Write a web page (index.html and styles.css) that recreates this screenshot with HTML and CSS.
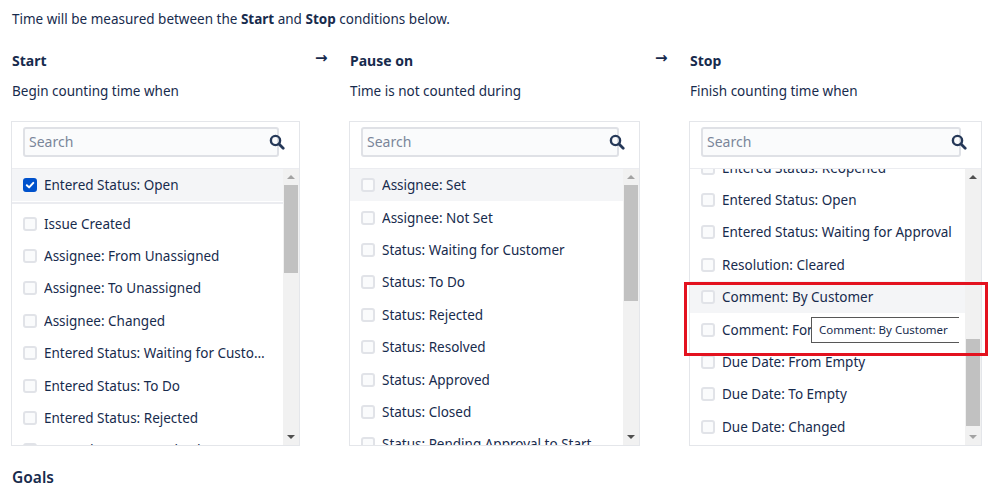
FILE: index.html
```html
<!DOCTYPE html>
<html>
<head>
<meta charset="utf-8">
<link rel="stylesheet" href="styles.css">
</head>
<body>
<p class="intro">Time will be measured between the <b>Start</b> and <b>Stop</b> conditions below.</p>
<div class="cols">
  <section class="col col-start">
    <h3 class="title">Start</h3>
    <p class="sub">Begin counting time when</p>
    <div class="box">
      <div class="search">
        <div class="input">Search</div>
        <svg class="mag" viewBox="0 0 16 16" width="16" height="16"><circle cx="6.5" cy="6.5" r="4.6" fill="none" stroke="#253858" stroke-width="2.4"/><line x1="10" y1="10" x2="14.2" y2="14.2" stroke="#253858" stroke-width="2.8" stroke-linecap="round"/></svg>
      </div>
      <div class="body">
        <div class="list">
          <div class="row hl"><span class="cb on"><svg viewBox="0 0 14 14" width="14" height="14"><polyline points="3.8,7.2 6.1,9.4 10.3,4.9" fill="none" stroke="#fff" stroke-width="2" stroke-linecap="round" stroke-linejoin="round"/></svg></span><span class="txt">Entered Status: Open</span></div>
          <div class="sep"></div>
          <div class="row"><span class="cb"></span><span class="txt">Issue Created</span></div>
          <div class="row"><span class="cb"></span><span class="txt">Assignee: From Unassigned</span></div>
          <div class="row"><span class="cb"></span><span class="txt">Assignee: To Unassigned</span></div>
          <div class="row"><span class="cb"></span><span class="txt">Assignee: Changed</span></div>
          <div class="row"><span class="cb"></span><span class="txt">Entered Status: Waiting for Customer</span></div>
          <div class="row"><span class="cb"></span><span class="txt">Entered Status: To Do</span></div>
          <div class="row"><span class="cb"></span><span class="txt">Entered Status: Rejected</span></div>
          <div class="row"><span class="cb"></span><span class="txt">Entered Status: Resolved</span></div>
        </div>
        <div class="sb">
          <div class="btn"><span class="up off"></span></div>
          <div class="track">
            <div class="thumb thumb-start"></div>
          </div>
          <div class="btn"><span class="down"></span></div>
        </div>
      </div>
    </div>
  </section>
  <div class="arrow">&rarr;</div>
  <section class="col col-pause">
    <h3 class="title">Pause on</h3>
    <p class="sub">Time is not counted during</p>
    <div class="box">
      <div class="search">
        <div class="input">Search</div>
        <svg class="mag" viewBox="0 0 16 16" width="16" height="16"><circle cx="6.5" cy="6.5" r="4.6" fill="none" stroke="#253858" stroke-width="2.4"/><line x1="10" y1="10" x2="14.2" y2="14.2" stroke="#253858" stroke-width="2.8" stroke-linecap="round"/></svg>
      </div>
      <div class="body">
        <div class="list">
          <div class="row hl"><span class="cb"></span><span class="txt">Assignee: Set</span></div>
          <div class="row"><span class="cb"></span><span class="txt">Assignee: Not Set</span></div>
          <div class="row"><span class="cb"></span><span class="txt">Status: Waiting for Customer</span></div>
          <div class="row"><span class="cb"></span><span class="txt">Status: To Do</span></div>
          <div class="row"><span class="cb"></span><span class="txt">Status: Rejected</span></div>
          <div class="row"><span class="cb"></span><span class="txt">Status: Resolved</span></div>
          <div class="row"><span class="cb"></span><span class="txt">Status: Approved</span></div>
          <div class="row"><span class="cb"></span><span class="txt">Status: Closed</span></div>
          <div class="row"><span class="cb"></span><span class="txt">Status: Pending Approval to Start</span></div>
        </div>
        <div class="sb">
          <div class="btn"><span class="up off"></span></div>
          <div class="track">
            <div class="thumb thumb-pause"></div>
          </div>
          <div class="btn"><span class="down"></span></div>
        </div>
      </div>
    </div>
  </section>
  <div class="arrow">&rarr;</div>
  <section class="col col-stop">
    <h3 class="title">Stop</h3>
    <p class="sub">Finish counting time when</p>
    <div class="box">
      <div class="search">
        <div class="input">Search</div>
        <svg class="mag" viewBox="0 0 16 16" width="16" height="16"><circle cx="6.5" cy="6.5" r="4.6" fill="none" stroke="#253858" stroke-width="2.4"/><line x1="10" y1="10" x2="14.2" y2="14.2" stroke="#253858" stroke-width="2.8" stroke-linecap="round"/></svg>
      </div>
      <div class="body">
        <div class="list scrolled">
          <div class="row"><span class="cb"></span><span class="txt">Entered Status: Reopened</span></div>
          <div class="row"><span class="cb"></span><span class="txt">Entered Status: Open</span></div>
          <div class="row"><span class="cb"></span><span class="txt">Entered Status: Waiting for Approval</span></div>
          <div class="row"><span class="cb"></span><span class="txt">Resolution: Cleared</span></div>
          <div class="row hl"><span class="cb"></span><span class="txt">Comment: By Customer</span></div>
          <div class="row"><span class="cb"></span><span class="txt">Comment: For Customer</span></div>
          <div class="row"><span class="cb"></span><span class="txt">Due Date: From Empty</span></div>
          <div class="row"><span class="cb"></span><span class="txt">Due Date: To Empty</span></div>
          <div class="row"><span class="cb"></span><span class="txt">Due Date: Changed</span></div>
        </div>
        <div class="sb">
          <div class="btn"><span class="up"></span></div>
          <div class="track">
            <div class="thumb thumb-stop"></div>
          </div>
          <div class="btn"><span class="down off"></span></div>
        </div>
      </div>
      <div class="tooltip">Comment: By Customer</div>
      <div class="highlight-frame"></div>
    </div>
  </section>
</div>
<h3 class="goals">Goals</h3>
</body>
</html>
```

FILE: styles.css
```css
* { box-sizing: border-box; }

html, body {
  margin: 0;
  padding: 0;
  background: #ffffff;
}

body {
  font-family: "Noto Sans", "Open Sans", Arial, sans-serif;
  font-size: 13.5px;
  color: #172b4d;
  width: 998px;
  height: 500px;
  overflow: hidden;
}

.intro {
  margin: 9px 0 0 12px;
  line-height: 20px;
}

.intro b { font-weight: 700; }

.cols {
  display: grid;
  grid-template-columns: 289px 49px 291px 49px 293px;
  margin: 22px 0 0 11px;
}

.title {
  margin: 0;
  padding-left: 1px;
  font-size: 14px;
  font-weight: 700;
  line-height: 20px;
}

.sub {
  margin: 10px 0 0 0;
  padding-left: 1px;
  line-height: 20px;
}

.arrow {
  padding: 0 0 0 15px;
  font-family: "DejaVu Sans", sans-serif;
  font-size: 15px;
  font-weight: 700;
  line-height: 14px;
  margin-top: 0;
}

.box {
  position: relative;
  margin-top: 20px;
  height: 325px;
  border: 1px solid #e4e6ea;
  display: flex;
  flex-direction: column;
}

.search {
  position: relative;
  padding: 5px 20px 0 11px;
  height: 47px;
  border-bottom: 1px solid #ebecf0;
  flex: none;
}

.input {
  height: 30px;
  border: 2px solid #dfe1e6;
  border-radius: 3px;
  background: #fafbfc;
  color: #7a869a;
  padding: 0 0 0 4px;
  font-size: 14px;
  line-height: 26px;
}

.mag {
  position: absolute;
  top: 12px;
  right: 14px;
}

.body {
  flex: 1;
  display: flex;
  min-height: 0;
}

.list {
  flex: 1;
  min-width: 0;
  overflow: hidden;
}

.list.scrolled .row:first-child {
  margin-top: -17.6px;
}

.row {
  height: 32.4px;
  display: flex;
  align-items: center;
  padding: 0 0 0 11px;
  white-space: nowrap;
}

.row.hl { background: #f4f5f7; }

.sep {
  height: 5px;
  border-top: 2px solid #ebecf0;
  margin-top: 1px;
}

.cb {
  flex: none;
  width: 14px;
  height: 14px;
  border: 2px solid #e1e3e8;
  border-radius: 3px;
  background: #fafbfc;
  margin-right: 7px;
  display: flex;
}

.cb.on {
  background: #0052cc;
  border-color: #0052cc;
}

.cb.on svg {
  margin: -2px;
  flex: none;
}

.txt {
  overflow: hidden;
  text-overflow: ellipsis;
  padding-right: 10px;
}

.sb {
  flex: none;
  width: 16px;
  background: #f1f1f1;
  display: flex;
  flex-direction: column;
}

.btn {
  flex: none;
  height: 16px;
  display: flex;
  align-items: center;
  justify-content: center;
}

.up, .down {
  width: 0;
  height: 0;
  border-left: 4px solid transparent;
  border-right: 4px solid transparent;
}

.up { border-bottom: 4px solid #505050; }
.down { border-top: 4px solid #505050; }
.up.off { border-bottom-color: #a3a3a3; }
.down.off { border-top-color: #a3a3a3; }

.track {
  flex: 1;
  display: flex;
  flex-direction: column;
}

.thumb {
  background: #c1c1c1;
  margin: 0 1px;
}

.thumb-start { height: 88px; }
.thumb-pause { height: 116px; }
.thumb-stop { height: 87px; margin-top: 154px; }

.tooltip {
  position: absolute;
  left: 121px;
  top: 195px;
  width: 148px;
  height: 26px;
  background: #ffffff;
  border: 1px solid #575757;
  border-right: none;
  font-size: 11.5px;
  line-height: 24px;
  padding-left: 7px;
  color: #172b4d;
  white-space: nowrap;
}

.highlight-frame {
  position: absolute;
  left: -6px;
  top: 160px;
  width: 304px;
  height: 74px;
  border: 3px solid #e3121f;
}

.goals {
  margin: 21px 0 0 12px;
  font-size: 15.5px;
  font-weight: 600;
  line-height: 20px;
}
```
